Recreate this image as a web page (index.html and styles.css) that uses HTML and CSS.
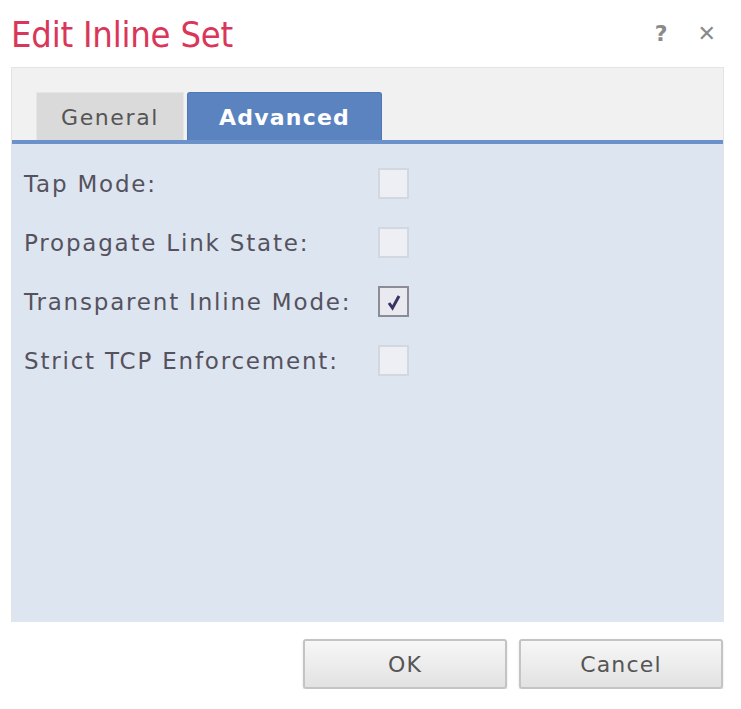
FILE: index.html
```html
<!DOCTYPE html>
<html>
<head>
<meta name="viewport" content="width=device-width, initial-scale=1.0">
  <title>Edit Inline Set</title>
<link rel="stylesheet" href="styles.css">
</head>
<body>
<div class="dialog">
  <!-- title bar -->
  <div class="dialog-head">
    <h1 class="dialog-title">Edit Inline Set</h1>
    <div class="head-icons">
      <span class="help">?</span>
      <span class="close">&#x2715;</span>
    </div>
  </div>

  <div class="panel">
    <div class="tab-bar">
      <div class="tab">General</div>
      <div class="tab active">Advanced</div>
    </div>
    <div class="tab-body">
      <div class="row">
        <span class="label">Tap Mode:</span>
        <span class="check"></span>
      </div>
      <div class="row">
        <span class="label">Propagate Link State:</span>
        <span class="check"></span>
      </div>
      <div class="row">
        <span class="label">Transparent Inline Mode:</span>
        <span class="check checked">
          <svg width="20" height="20" viewBox="0 0 20 20"><path d="M5 11 L8.5 16 L15 4" fill="none" stroke="#3b3463" stroke-width="3"/></svg>
        </span>
      </div>
      <div class="row">
        <span class="label">Strict TCP Enforcement:</span>
        <span class="check"></span>
      </div>
    </div>
  </div>

  <div class="buttons">
    <button class="btn ok">OK</button>
    <button class="btn">Cancel</button>
  </div>
</div>
</body>
</html>
```

FILE: styles.css
```css
* {box-sizing: border-box;}

body {
  margin: 0;
  background: #fff;
  font-family: "DejaVu Sans", Verdana, sans-serif;
}

.dialog {
  padding: 0 17px 0 11px;
}

/* header */
.dialog-head {
  height: 67px;
  display: flex;
  justify-content: space-between;
  align-items: flex-start;
}

.dialog-title {
  margin: 0;
  padding-top: 13px;
  font-family: "Liberation Sans Narrow", "DejaVu Sans Condensed", "Liberation Sans", sans-serif;
  font-weight: normal;
  font-size: 36px;
  line-height: 44px;
  letter-spacing: -0.2px;
  color: #d9375a;
}

.head-icons {
  display: flex;
  gap: 30px;
  padding-top: 21px;
  padding-right: 8px;
  color: #8a8a8a;
  font-size: 22px;
  font-weight: bold;
}

/* panel with tabs */
.panel {
  border: 1px solid #e4e4e4;
  border-bottom: 0;
}

.tab-bar {
  height: 76px;
  background: #f1f1f1;
  display: flex;
  align-items: flex-end;
  gap: 3px;
  padding-left: 24px;
  border-bottom: 4px solid #6b91ca;
}

.tab {
  width: 148px;
  height: 48px;
  background: #dadada;
  border: 1px solid #e6e6e6;
  border-bottom: 0;
  color: #555;
  font-size: 22px;
  letter-spacing: 1.6px;
  display: flex;
  align-items: center;
  justify-content: center;
  padding-top: 2px;
}

.tab.active {
  width: 195px;
  background: #5b83c0;
  border-color: #4f77b6;
  border-radius: 3px 3px 0 0;
  color: #fff;
  font-weight: bold;
  letter-spacing: 1.2px;
}

.tab-body {
  height: 478px;
  background: #dde5f0;
  padding: 10px 0 0 12px;
}

.row {
  height: 59px;
  display: flex;
  align-items: center;
}

.label {
  width: 354px;
  font-size: 23px;
  letter-spacing: 1.8px;
  color: #55525e;
}

.check {
  width: 31px;
  height: 31px;
  border: 2px solid #d3d8e0;
  background: #eeeff5;
  display: flex;
  align-items: center;
  justify-content: center;
}

.check.checked {
  border-color: #8d8b96;
  background: #e9e9f0;
}

/* footer buttons */
.buttons {
  display: flex;
  justify-content: flex-end;
  gap: 12px;
  padding-top: 17px;
  padding-right: 1px;
}

.btn {
  width: 204px;
  height: 50px;
  border: 2px solid #c4c4c4;
  border-radius: 3px;
  background: linear-gradient(#f7f7f7, #e2e2e2);
  box-shadow: 0 1px 2px rgba(0, 0, 0, .15);
  font-family: "DejaVu Sans", Verdana, sans-serif;
  font-size: 22px;
  letter-spacing: 1.2px;
  color: #555;
}
```
